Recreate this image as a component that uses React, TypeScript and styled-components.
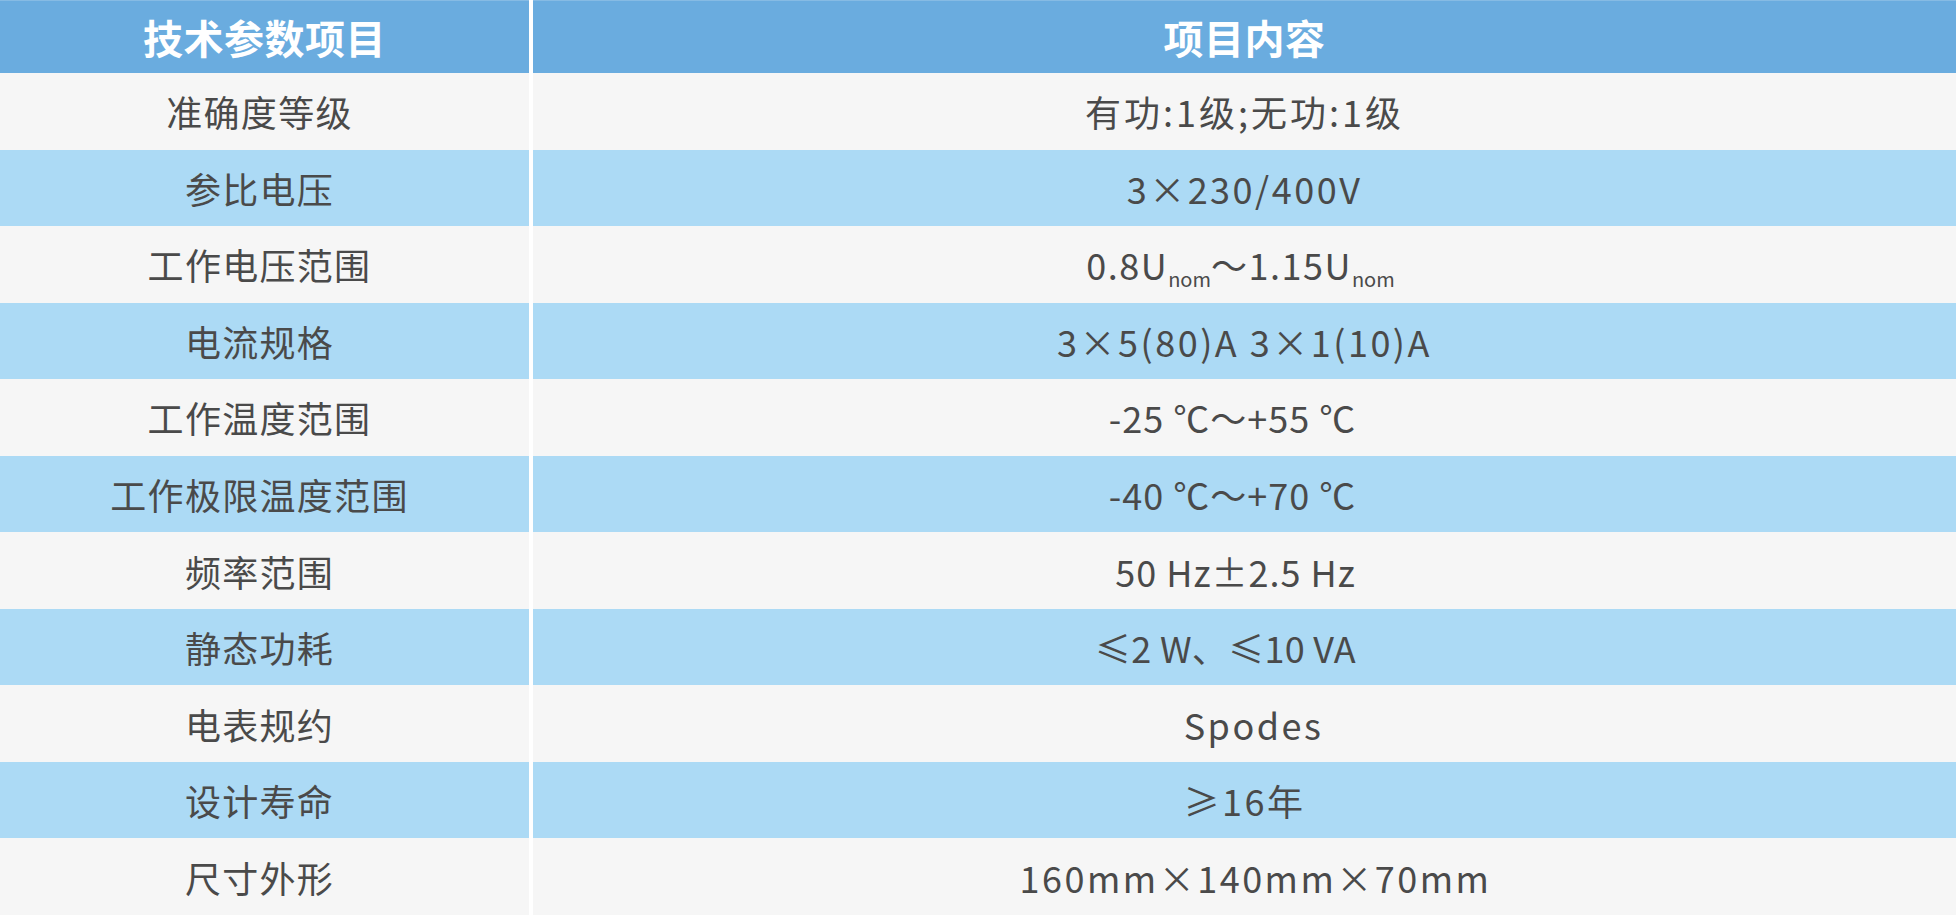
import { styled, createGlobalStyle } from "styled-components";

const GlobalStyle = createGlobalStyle`
  html, body {
    margin: 0;
    padding: 0;
    background: #ffffff;
  }
  * {
    box-sizing: border-box;
  }
`;

const Table = styled.div`
  width: 1956px;
  height: 915px;
  display: grid;
  grid-template-columns: 529px 1423px;
  grid-template-rows: 73px repeat(11, 1fr);
  column-gap: 4px;
  font-family: "Noto Sans CJK SC", "Noto Sans", sans-serif;
`;

const HeadCell = styled.div`
  display: flex;
  align-items: center;
  justify-content: center;
  background: #6aacdf;
  border-top: 1px solid #86bbe4;
  color: #ffffff;
  font-size: 40px;
  font-weight: 700;
  letter-spacing: 0.5px;
`;

const Cell = styled.div<{ $blue: boolean; $spacing: number; $shift: number }>`
  display: flex;
  align-items: center;
  justify-content: center;
  padding-left: ${(p) => (p.$shift > 0 ? p.$shift * 2 : 0)}px;
  padding-right: ${(p) => (p.$shift < 0 ? -p.$shift * 2 : 0)}px;
  background: ${(p) => (p.$blue ? "#acdaf5" : "#f6f6f6")};
  color: #4a4a4a;
  font-size: 36px;
  letter-spacing: ${(p) => p.$spacing}px;
  white-space: pre;
`;

const Sub = styled.sub`
  font-size: 20px;
  letter-spacing: 0;
  vertical-align: -7px;
  line-height: 0;
`;

type Row = { name: string; value: React.ReactNode; spacing: number; shift: number };

const rows: Row[] = [
  { name: "准确度等级", value: "有功:1级;无功:1级", spacing: 3, shift: 0 },
  { name: "参比电压", value: "3×230/400V", spacing: 2.5, shift: 0 },
  {
    name: "工作电压范围",
    value: (
      <>
        0.8U<Sub>nom</Sub>～1.15U<Sub>nom</Sub>
      </>
    ),
    spacing: 1.5,
    shift: -4,
  },
  { name: "电流规格", value: "3×5(80)A 3×1(10)A", spacing: 2.5, shift: 0 },
  { name: "工作温度范围", value: "-25 ℃～+55 ℃", spacing: 1, shift: -12 },
  { name: "工作极限温度范围", value: "-40 ℃～+70 ℃", spacing: 1, shift: -12 },
  { name: "频率范围", value: "50 Hz±2.5 Hz", spacing: 1, shift: -9 },
  { name: "静态功耗", value: "≤2 W、≤10 VA", spacing: 0.3, shift: -19 },
  { name: "电表规约", value: "Spodes", spacing: 2.5, shift: 9 },
  { name: "设计寿命", value: "≥16年", spacing: 2.5, shift: 0 },
  { name: "尺寸外形", value: "160mm×140mm×70mm", spacing: 2.5, shift: 11 },
];

export default function App() {
  return (
    <>
      <GlobalStyle />
      <Table>
        <HeadCell>技术参数项目</HeadCell>
        <HeadCell>项目内容</HeadCell>
        {rows.map((r, i) => (
          <>
            <Cell key={r.name} $blue={i % 2 === 1} $spacing={1.3} $shift={-5}>
              <span>{r.name}</span>
            </Cell>
            <Cell key={r.name + "-v"} $blue={i % 2 === 1} $spacing={r.spacing} $shift={r.shift}>
              <span>{r.value}</span>
            </Cell>
          </>
        ))}
      </Table>
    </>
  );
}
